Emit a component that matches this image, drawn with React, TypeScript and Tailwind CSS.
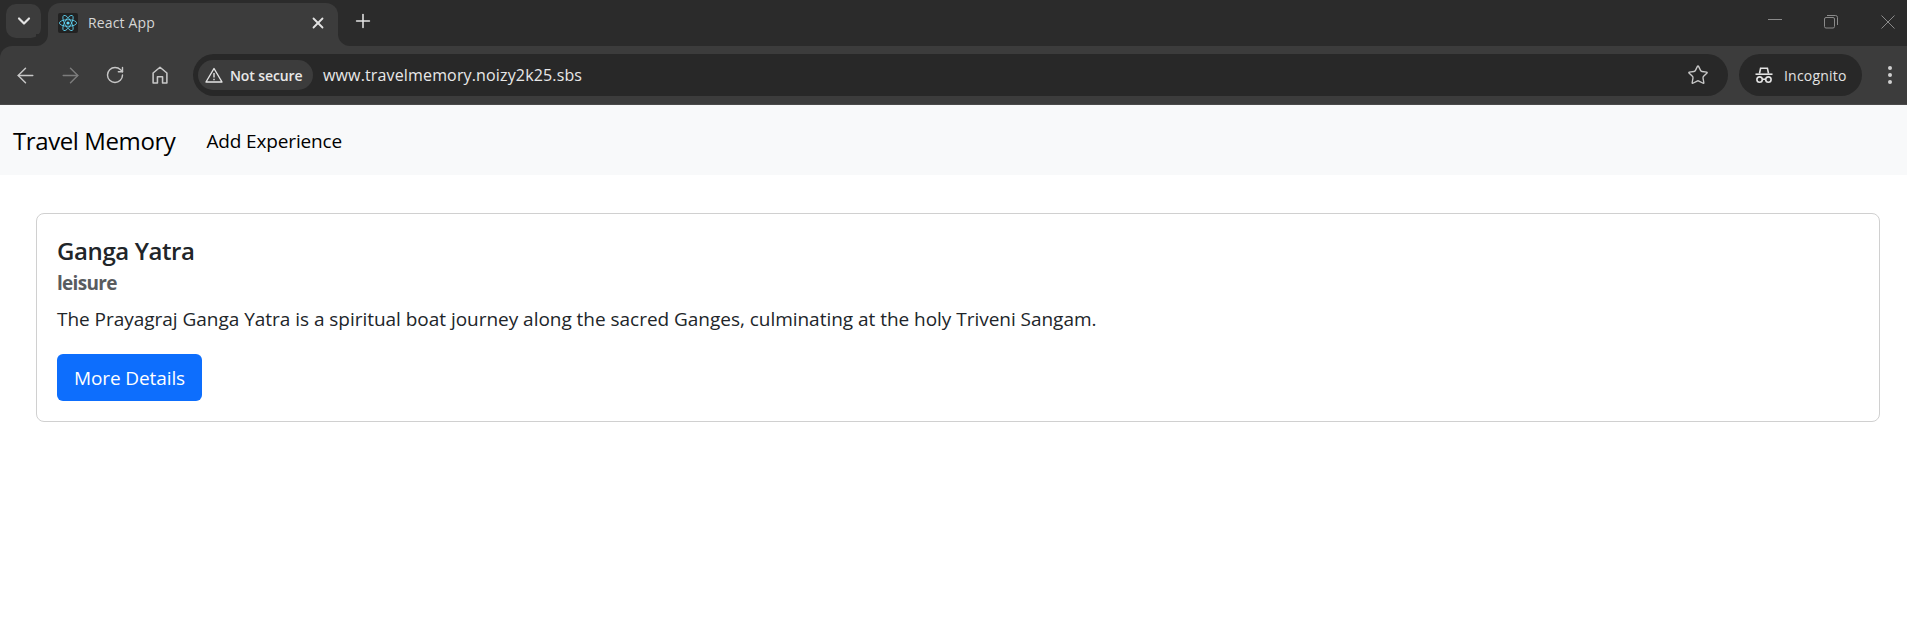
import React from 'react';
import { ArrowLeft, ArrowRight, RotateCw, Star, ChevronDown, X, Plus } from 'lucide-react';

function ReactLogo() {
  return (
    <div className="w-5 h-5 rounded-[2px] bg-[#222222] flex items-center justify-center">
      <svg viewBox="-11.5 -10.2 23 20.4" className="w-[18px] h-[16px]" fill="none" stroke="#61dafb" strokeWidth="1">
        <circle r="2.05" fill="#61dafb" stroke="none" />
        <ellipse rx="11" ry="4.2" />
        <ellipse rx="11" ry="4.2" transform="rotate(60)" />
        <ellipse rx="11" ry="4.2" transform="rotate(120)" />
      </svg>
    </div>
  );
}

function HomeIcon() {
  return (
    <svg viewBox="0 0 18 18" className="w-5 h-5" fill="none" stroke="#c7c7c7" strokeWidth="1.4" strokeLinejoin="round">
      <path d="M2.8 16.2V7.2L9 2l6.2 5.2v9h-3.9v-5.6H6.7v5.6z" />
    </svg>
  );
}

function WarningIcon() {
  return (
    <svg viewBox="0 0 18 16" className="w-[18px] h-[16px]" fill="none" stroke="#e3e3e3" strokeWidth="1.4" strokeLinejoin="round">
      <path d="M9 1.5 17 15H1z" />
      <path d="M9 6v4.6M9 11.8v1.4" />
    </svg>
  );
}

function IncognitoIcon() {
  return (
    <svg viewBox="0 0 20 20" className="w-5 h-5" fill="none" stroke="#e3e3e3" strokeWidth="1.6">
      <path d="M5.5 8.5 6.6 3.2h6.8l1.1 5.3" />
      <path d="M1.5 9.2h17" />
      <circle cx="5.6" cy="14.6" r="2.7" />
      <circle cx="14.4" cy="14.6" r="2.7" />
      <path d="M8.3 14.2h3.4" />
    </svg>
  );
}

function WindowControls() {
  return (
    <div className="ml-auto flex items-center text-[#8a8a8a]">
      <svg viewBox="0 0 14 14" className="w-[14px] h-[14px] mr-[42px] mb-[4px]" stroke="currentColor" fill="none"><path d="M0 6.5h14" /></svg>
      <svg viewBox="0 0 14 14" className="w-[14px] h-[14px] mr-[43px]" stroke="currentColor" fill="none">
        <rect x="0.5" y="2.5" width="10" height="10.5" rx="1.5" />
        <path d="M3 0.5h8.5a2 2 0 0 1 2 2V10" />
      </svg>
      <svg viewBox="0 0 14 14" className="w-[14px] h-[14px] mr-[6px]" stroke="currentColor" fill="none"><path d="M0.5 0.5l13 13M13.5 0.5l-13 13" /></svg>
    </div>
  );
}

function TabStrip() {
  return (
    <div className="h-[46px] bg-[#2b2b2b] flex items-end pl-[6px] pr-[6px] shrink-0">
      <div className="w-[35px] h-[34px] mb-[8px] rounded-[10px] bg-[#3c3c3c] flex items-center justify-center">
        <ChevronDown className="w-5 h-5 text-[#e3e3e3]" strokeWidth={2.6} />
      </div>
      <div className="relative ml-[7px] w-[290px] h-[43px] bg-[#3c3c3c] rounded-t-[12px] flex items-center pl-[10px] pr-[11px] pb-[4px]">
        <div className="absolute -left-[12px] bottom-0 w-3 h-3 bg-[#3c3c3c]">
          <div className="w-3 h-3 bg-[#2b2b2b] rounded-br-[12px]" />
        </div>
        <div className="absolute -right-[12px] bottom-0 w-3 h-3 bg-[#3c3c3c]">
          <div className="w-3 h-3 bg-[#2b2b2b] rounded-bl-[12px]" />
        </div>
        <ReactLogo />
        <span className="ml-[10px] text-[14px] text-[#d6d6d6] font-['Open_Sans',sans-serif] tracking-[0.15px]">React App</span>
        <X className="ml-auto w-[18px] h-[18px] text-[#e3e3e3]" strokeWidth={2.4} />
      </div>
      <div className="ml-[14px] h-[46px] flex items-center pb-[5px]">
        <Plus className="w-[22px] h-[22px] text-[#e3e3e3]" strokeWidth={1.7} />
      </div>
      <div className="flex-1 h-full flex items-center pb-[2px]">
        <WindowControls />
      </div>
    </div>
  );
}

function Toolbar() {
  return (
    <div className="bg-[#2b2b2b] shrink-0">
      <div className="h-[58px] bg-[#3c3c3c] rounded-tl-[12px] flex items-center pl-[13px] pr-[12px]">
        <ArrowLeft className="w-[25px] h-[25px] text-[#c7c7c7]" strokeWidth={1.4} />
        <ArrowRight className="ml-[20px] w-[25px] h-[25px] text-[#7c7c7c]" strokeWidth={1.4} />
        <RotateCw className="ml-[22px] w-5 h-5 text-[#c7c7c7]" strokeWidth={1.7} />
        <div className="ml-[25px]"><HomeIcon /></div>
        <div className="ml-[23px] w-[1535px] h-[42px] rounded-full bg-[#282828] flex items-center pl-[5px] pr-[19px]">
          <div className="h-[30px] w-[115px] rounded-full bg-[#3c3c3c] flex items-center pl-[7px]">
            <WarningIcon />
            <span className="ml-[7px] text-[14px] font-semibold text-[#e8e8e8] font-['Open_Sans',sans-serif] tracking-[-0.1px]">Not secure</span>
          </div>
          <span className="ml-[10px] text-[16px] text-[#e8e8e8] font-['Open_Sans',sans-serif] tracking-[0.15px]">www.travelmemory.noizy2k25.sbs</span>
          <Star className="ml-auto w-[22px] h-[22px] text-[#c7c7c7]" strokeWidth={1.5} />
        </div>
        <div className="ml-[11px] w-[123px] h-[42px] rounded-full bg-[#282828] flex items-center pl-[15px]">
          <IncognitoIcon />
          <span className="ml-[10px] text-[14px] text-[#e3e3e3] font-['Open_Sans',sans-serif] tracking-[0.2px]">Incognito</span>
        </div>
        <div className="ml-[26px] flex flex-col gap-[3px]">
          <span className="w-1 h-1 rounded-full bg-[#d0d0d0]" />
          <span className="w-1 h-1 rounded-full bg-[#d0d0d0]" />
          <span className="w-1 h-1 rounded-full bg-[#d0d0d0]" />
        </div>
      </div>
      <div className="h-px bg-[#4a4a4a]" />
    </div>
  );
}

export default function App() {
  return (
    <div className="h-[631px] bg-white flex flex-col overflow-hidden font-['Open_Sans',sans-serif]">
      <TabStrip />
      <Toolbar />
      <nav className="h-[70px] bg-[#f8f9fa] flex items-center pl-[13px] pt-[2px] shrink-0">
        <span className="text-[24px] text-black tracking-[-0.4px]">Travel Memory</span>
        <span className="ml-[31px] text-[19px] text-black tracking-[-0.15px]">Add Experience</span>
      </nav>
      <div className="pl-[36px] pr-[27px] pt-[38px]">
        <div className="h-[209px] rounded-[8px] border border-[#d0d0d0] px-[20px] pt-[22px]">
          <h5 className="text-[24px] leading-[29px] font-semibold text-[#212529] tracking-[-0.4px]">Ganga Yatra</h5>
          <h6 className="mt-[6px] text-[19px] leading-[24px] font-bold text-[#595c5f] tracking-[-0.7px]">leisure</h6>
          <p className="mt-[10px] text-[19px] leading-[28px] text-[#212529] tracking-[-0.03px]">The Prayagraj Ganga Yatra is a spiritual boat journey along the sacred Ganges, culminating at the holy Triveni Sangam.</p>
          <button className="mt-[21px] w-[145px] h-[47px] rounded-[6px] bg-[#0d6efd] text-white text-[19px] tracking-[-0.1px] pt-[2px]">More Details</button>
        </div>
      </div>
    </div>
  );
}
